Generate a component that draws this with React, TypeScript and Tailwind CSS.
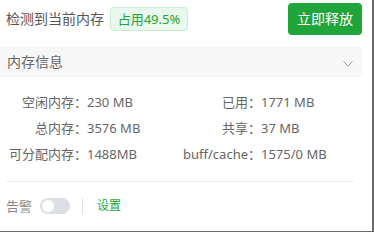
import React from "react";

const rows: [string, string, string, string][] = [
  ["空闲内存：", "230 MB", "已用：", "1771 MB"],
  ["总内存：", "3576 MB", "共享：", "37 MB"],
  ["可分配内存：", "1488MB", "buff/cache：", "1575/0 MB"],
];

export default function App() {
  return (
    <div className="w-[374px] h-[232px] bg-white border-r-2 border-b border-[#6b6b6b] box-border overflow-hidden font-['Noto_Sans','Noto_Sans_CJK_SC',sans-serif]">
      <div className="w-[362px]">
        <div className="flex items-center justify-between pl-[6px] pt-[3px] h-[35px]">
          <div className="flex items-center gap-[6px]">
            <span className="text-[14px] text-[#555] leading-none">检测到当前内存</span>
            <span className="w-[78px] h-[24px] flex items-center justify-center border border-[#c8ecd1] bg-[#e9f7ed] text-[#20a53a] text-[13px] rounded-[4px] leading-none">
              占用49.5%
            </span>
          </div>
          <button className="w-[74px] h-[32px] bg-[#20a53a] text-white text-[14px] rounded-[4px] leading-none">
            立即释放
          </button>
        </div>
        <div className="mt-[12px] h-[30px] bg-[#f7f7f7] flex items-center justify-between pl-[7px] pr-[9px]">
          <span className="text-[14px] text-[#666] leading-none">内存信息</span>
          <svg width="10" height="6" viewBox="0 0 10 6" fill="none" className="mt-[3px]">
            <path d="M0.5 0.5L5 5L9.5 0.5" stroke="#999" strokeWidth="1" />
          </svg>
        </div>
        <div className="mt-[12px] px-[6px] w-[360px]">
          {rows.map((r, i) => (
            <div key={i} className="grid grid-cols-2 h-[26px] text-[13px] text-[#666] leading-none">
              <div className="flex items-center">
                <span className="w-[81px] text-right whitespace-nowrap">{r[0]}</span>
                <span className="whitespace-nowrap">{r[1]}</span>
              </div>
              <div className="flex items-center">
                <span className="w-[81px] text-right whitespace-nowrap">{r[2]}</span>
                <span className="whitespace-nowrap">{r[3]}</span>
              </div>
            </div>
          ))}
        </div>
        <div className="mt-[14px] ml-[6px] w-[348px] border-t border-[#eeeeee]" />
        <div className="mt-[16px] h-[16px] flex items-center pl-[6px] text-[13px] leading-none">
          <span className="text-[#888]">告警</span>
          <span className="ml-[8px] w-[30px] h-[16px] rounded-full bg-[#dcdfe6] relative">
            <span className="absolute left-[2px] top-[2px] w-[12px] h-[12px] rounded-full bg-white" />
          </span>
          <span className="ml-[12px] w-px h-[16px] bg-[#dcdfe6]" />
          <span className="ml-[14px] text-[12px] text-[#20a53a]">设置</span>
        </div>
      </div>
    </div>
  );
}
